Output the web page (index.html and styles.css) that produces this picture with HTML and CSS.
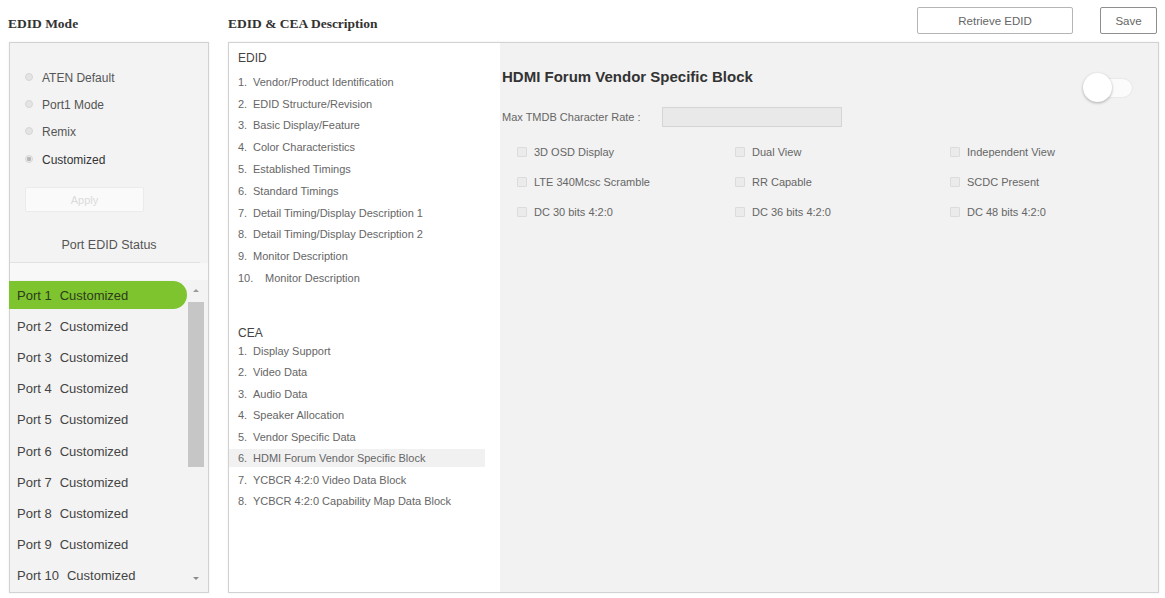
FILE: index.html
```html
<!DOCTYPE html>
<html>
<head>
<meta charset="utf-8">
<title>EDID</title>
<link rel="stylesheet" href="styles.css">
</head>
<body>
<div class="top">
  <div class="h-mode">EDID Mode</div>
  <div class="h-desc">EDID &amp; CEA Description</div>
  <div class="btns">
    <button class="btn btn-retrieve">Retrieve EDID</button>
    <button class="btn btn-save">Save</button>
  </div>
</div>
<div class="main">
  <div class="left-panel">
    <div class="radios">
      <label class="radio"><span class="dot"></span><span class="rlabel">ATEN Default</span></label>
      <label class="radio"><span class="dot"></span><span class="rlabel">Port1 Mode</span></label>
      <label class="radio"><span class="dot"></span><span class="rlabel">Remix</span></label>
      <label class="radio checked"><span class="dot"></span><span class="rlabel">Customized</span></label>
    </div>
    <div class="apply">Apply</div>
    <div class="status-title">Port EDID Status</div>
    <div class="sep"></div>
    <div class="portlist">
      <div class="ports">
        <div class="port active">Port 1<span class="pst">Customized</span></div>
        <div class="port">Port 2<span class="pst">Customized</span></div>
        <div class="port">Port 3<span class="pst">Customized</span></div>
        <div class="port">Port 4<span class="pst">Customized</span></div>
        <div class="port">Port 5<span class="pst">Customized</span></div>
        <div class="port">Port 6<span class="pst">Customized</span></div>
        <div class="port">Port 7<span class="pst">Customized</span></div>
        <div class="port">Port 8<span class="pst">Customized</span></div>
        <div class="port">Port 9<span class="pst">Customized</span></div>
        <div class="port">Port 10<span class="pst">Customized</span></div>
      </div>
      <div class="scrollbar">
        <div class="sb-btn"><span class="arr-up"></span></div>
        <div class="sb-thumb"></div>
        <div class="sb-fill"></div>
        <div class="sb-btn"><span class="arr-down"></span></div>
      </div>
    </div>
  </div>
  <div class="desc-panel">
    <div class="desc-list">
      <div class="grp-title">EDID</div>
      <ul class="items edid">
        <li><span class="num">1.</span>Vendor/Product Identification</li>
        <li><span class="num">2.</span>EDID Structure/Revision</li>
        <li><span class="num">3.</span>Basic Display/Feature</li>
        <li><span class="num">4.</span>Color Characteristics</li>
        <li><span class="num">5.</span>Established Timings</li>
        <li><span class="num">6.</span>Standard Timings</li>
        <li><span class="num">7.</span>Detail Timing/Display Description 1</li>
        <li><span class="num">8.</span>Detail Timing/Display Description 2</li>
        <li><span class="num">9.</span>Monitor Description</li>
        <li><span class="num wide">10.</span>Monitor Description</li>
      </ul>
      <div class="grp-title cea">CEA</div>
      <ul class="items cea-items">
        <li><span class="num">1.</span>Display Support</li>
        <li><span class="num">2.</span>Video Data</li>
        <li><span class="num">3.</span>Audio Data</li>
        <li><span class="num">4.</span>Speaker Allocation</li>
        <li><span class="num">5.</span>Vendor Specific Data</li>
        <li class="sel"><span class="num">6.</span>HDMI Forum Vendor Specific Block</li>
        <li><span class="num">7.</span>YCBCR 4:2:0 Video Data Block</li>
        <li><span class="num">8.</span>YCBCR 4:2:0 Capability Map Data Block</li>
      </ul>
    </div>
    <div class="detail">
      <div class="title-row">
        <div class="d-title">HDMI Forum Vendor Specific Block</div>
        <div class="toggle"><span class="track"></span><span class="knob"></span></div>
      </div>
      <div class="field-row">
        <span class="f-label">Max TMDB Character Rate :</span>
        <span class="f-input"></span>
      </div>
      <div class="checks">
        <label class="chk"><span class="box"></span>3D OSD Display</label>
        <label class="chk"><span class="box"></span>Dual View</label>
        <label class="chk"><span class="box"></span>Independent View</label>
        <label class="chk"><span class="box"></span>LTE 340Mcsc Scramble</label>
        <label class="chk"><span class="box"></span>RR Capable</label>
        <label class="chk"><span class="box"></span>SCDC Present</label>
        <label class="chk"><span class="box"></span>DC 30 bits 4:2:0</label>
        <label class="chk"><span class="box"></span>DC 36 bits 4:2:0</label>
        <label class="chk"><span class="box"></span>DC 48 bits 4:2:0</label>
      </div>
    </div>
  </div>
</div>
</body>
</html>
```

FILE: styles.css
```css
* { box-sizing: border-box; }
html, body { margin: 0; padding: 0; background: #fff; }
body {
  font-family: "Liberation Sans", Arial, sans-serif;
  color: #555;
  width: 1165px;
  height: 598px;
  overflow: hidden;
}

/* top bar */
.top {
  display: flex;
  align-items: flex-start;
  height: 42px;
}
.h-mode, .h-desc {
  font-family: "Liberation Serif", "Times New Roman", serif;
  font-weight: bold;
  font-size: 13.5px;
  line-height: 16px;
  color: #333;
  padding-top: 16px;
}
.h-mode { width: 228px; padding-left: 8px; }
.h-desc { flex: 1; }
.btns {
  display: flex;
  gap: 27px;
  margin-right: 8px;
  padding-top: 7px;
}
.btn {
  height: 27px;
  background: #fff;
  border: 1px solid #a9a9a9;
  border-radius: 2px;
  font-family: "Liberation Sans", Arial, sans-serif;
  font-size: 11.5px;
  color: #666;
  padding: 0;
}
.btn-retrieve { width: 156px; border-color: #b5b5b5; }
.btn-save { width: 57px; border-color: #8e8e8e; }

/* main */
.main {
  display: flex;
  padding-left: 9px;
  gap: 19px;
  height: 551px;
}

/* left panel */
.left-panel {
  width: 200px;
  height: 551px;
  background: #f3f3f3;
  border: 1px solid #d2d2d2;
  box-shadow: 0 0 2px rgba(0,0,0,0.08);
  display: flex;
  flex-direction: column;
}
.radios {
  padding-top: 21px;
  padding-left: 15px;
  display: flex;
  flex-direction: column;
}
.radio {
  height: 27.3px;
  display: flex;
  align-items: center;
  font-size: 12px;
  color: #555;
}
.radio.checked { color: #333; }
.dot {
  width: 8px;
  height: 8px;
  border-radius: 50%;
  background: #e4e4e4;
  border: 1px solid #d6d6d6;
  margin-right: 9px;
  margin-top: -2px;
}
.radio.checked .dot {
  background: radial-gradient(circle, #b8b8b8 0 2px, #ececec 2.5px);
}
.apply {
  margin: 14px 0 0 15px;
  width: 119px;
  height: 25px;
  background: #fafafa;
  border: 1px solid #ebebeb;
  border-radius: 2px;
  font-size: 11px;
  color: #dadada;
  display: flex;
  align-items: center;
  justify-content: center;
}
.status-title {
  margin-top: 24px;
  line-height: 18px;
  text-align: center;
  font-size: 12.5px;
  color: #555;
}
.sep {
  margin-top: 8px;
  height: 1px;
  width: 190px;
  background: #e2e2e2;
}
.portlist {
  display: flex;
  padding-top: 17px;
  flex: 1;
  background: linear-gradient(#f8f8f8 0, #f8f8f8 17px, #f3f3f3 17px);
}
.ports {
  margin-left: -1px;
  width: 178px;
  padding-top: 1px;
  display: flex;
  flex-direction: column;
  gap: 3.2px;
}
.port {
  height: 28px;
  display: flex;
  align-items: center;
  padding-left: 8px;
  font-size: 13px;
  color: #444;
}
.pst { margin-left: 8px; }
.port.active {
  background: #7dc42e;
  border-radius: 0 14px 14px 0;
  color: #2d3a1e;
}
.scrollbar {
  margin-left: 1px;
  width: 16px;
  display: flex;
  flex-direction: column;
  padding-bottom: 4px;
}
.sb-btn {
  height: 20px;
  display: flex;
  align-items: center;
  justify-content: center;
}
.arr-up, .arr-down {
  width: 0;
  height: 0;
  border-left: 3px solid transparent;
  border-right: 3px solid transparent;
}
.arr-up { border-bottom: 3px solid #9a9a9a; }
.arr-down { border-top: 3px solid #8a8a8a; }
.sb-thumb {
  margin-top: 2px;
  height: 165px;
  background: #c6c6c6;
}
.sb-fill { flex: 1; }

/* description panel */
.desc-panel {
  width: 931px;
  height: 551px;
  border: 1px solid #d2d2d2;
  box-shadow: 0 0 2px rgba(0,0,0,0.08);
  display: flex;
}
.desc-list {
  width: 271px;
  background: #fff;
  padding-top: 8px;
}
.grp-title {
  padding-left: 9px;
  font-size: 12px;
  line-height: 14px;
  color: #444;
}
.grp-title.cea { margin-top: 37px; }
.items {
  list-style: none;
  margin: 0;
  padding: 0;
}
.items.edid { margin-top: 6px; }
.items li {
  padding-left: 9px;
  font-size: 11px;
  color: #666;
  white-space: nowrap;
  display: flex;
  align-items: center;
}
.items.edid li { height: 21.8px; }
.items.cea-items li { height: 21.5px; }
.items li.sel {
  width: 256px;
  background: linear-gradient(transparent 2px, #f1f1f1 2px, #f1f1f1 20px, transparent 20px);
}
.num { display: inline-block; width: 15px; }
.num.wide { width: 27px; }

.detail {
  flex: 1;
  background: #f2f2f2;
  padding: 25px 26px 0 2px;
}
.title-row {
  display: flex;
  justify-content: space-between;
  align-items: flex-start;
  height: 34px;
}
.d-title {
  font-weight: bold;
  font-size: 15px;
  line-height: 18px;
  color: #333;
}
.toggle {
  position: relative;
  width: 49px;
  height: 29px;
  margin-top: 5px;
}
.track {
  position: absolute;
  left: 7px;
  top: 6px;
  width: 42px;
  height: 18px;
  border-radius: 9px;
  background: #fbfbfb;
  box-shadow: 0 0 2px rgba(0,0,0,0.12);
}
.knob {
  position: absolute;
  left: 0;
  top: 0;
  width: 29px;
  height: 29px;
  border-radius: 50%;
  background: #fff;
  box-shadow: 0 1px 3px rgba(0,0,0,0.3);
}
.field-row {
  margin-top: 5px;
  display: flex;
  align-items: center;
  height: 20px;
}
.f-label {
  width: 160px;
  font-size: 11px;
  color: #666;
  white-space: nowrap;
}
.f-input {
  width: 180px;
  height: 20px;
  background: #e9e9e9;
  border: 1px solid #d5d5d5;
}
.checks {
  margin-top: 10px;
  padding-left: 15px;
  display: grid;
  grid-template-columns: 218px 215px auto;
  grid-auto-rows: 30px;
}
.chk {
  display: flex;
  align-items: center;
  font-size: 11px;
  color: #666;
  white-space: nowrap;
}
.box {
  width: 10px;
  height: 10px;
  background: #ebebeb;
  border: 1px solid #dcdcdc;
  border-radius: 1px;
  margin-right: 7px;
}
```
